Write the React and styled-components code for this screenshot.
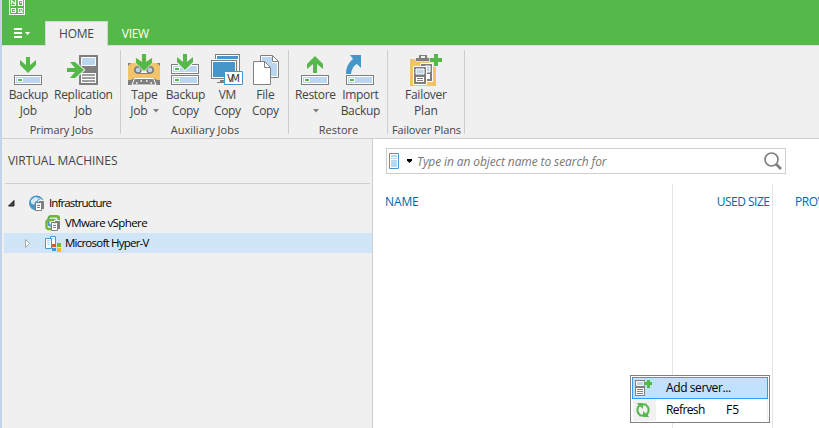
import React from "react";
import styled, { createGlobalStyle } from "styled-components";

const Global = createGlobalStyle`
  * { box-sizing: border-box; }
  body { margin: 0; background: #fff; overflow: hidden; }
  svg { display: block; flex: none; }
`;

const Window = styled.div`
  width: 819px;
  height: 428px;
  display: flex;
  flex-direction: column;
  overflow: hidden;
  border-left: 2px solid #c5d3e8;
  background: #f0f0f0;
  font-family: "Open Sans", "Noto Sans", sans-serif;
  font-size: 12px;
  color: #444;
  white-space: nowrap;
`;

const Text = styled.span`
  letter-spacing: ${(p) => p.$track || 0}px;
  margin-right: ${(p) => -(p.$track || 0)}px;
`;

const TitleBar = styled.header`
  height: 21px;
  flex: none;
  padding-left: 7px;
  background: #54b948;
`;

const TabBar = styled.nav`
  height: 25px;
  flex: none;
  display: flex;
  background: #54b948;
  border-bottom: 1px solid #dcdcdc;
`;

const FileMenu = styled.div`
  width: 43px;
  padding: 7px 0 0 12px;
`;

const Tab = styled.div`
  width: ${(p) => p.$width}px;
  height: 25px;
  display: flex;
  justify-content: center;
  line-height: 24px;
  color: ${(p) => (p.$active ? "#444" : "#fff")};
  background: ${(p) => (p.$active ? "#f0f0f0" : "transparent")};
  border: solid ${(p) => (p.$active ? "#cfdccd" : "transparent")};
  border-width: 1px 1px 0;
`;

const Ribbon = styled.section`
  height: 93px;
  flex: none;
  display: flex;
  padding: 4px 0;
  border-bottom: 1px solid #cfcfcf;
`;

const Group = styled.div`
  width: ${(p) => p.$width}px;
  height: 84px;
  display: flex;
  flex-direction: column;
  border-right: 1px solid #cfcfcf;
`;

const GroupTools = styled.div`
  height: 72px;
  flex: none;
  display: flex;
  padding: 4px 0 0 ${(p) => p.$inset}px;
`;

const GroupTitle = styled.div`
  display: flex;
  justify-content: center;
  padding-left: 1px;
  font-size: 11px;
  line-height: 16px;
`;

const Tool = styled.div`
  width: ${(p) => p.$width}px;
  display: flex;
  flex-direction: column;
  align-items: center;
  line-height: 16px;
`;

const ToolIcon = styled.div`
  height: 33px;
`;

const ToolLine = styled.div`
  height: 16px;
  display: flex;
  align-items: center;
  gap: 5px;
  padding-left: 1px;
`;

const Body = styled.main`
  flex: 1;
  display: flex;
  min-height: 0;
`;

const Sidebar = styled.aside`
  width: 371px;
  flex: none;
  border-right: 1px solid #cfcfcf;
`;

const SideTitle = styled.div`
  height: 45px;
  margin: 0 2px 0 3px;
  padding: 12px 0 0 3px;
  line-height: 20px;
  border-bottom: 1px solid #cfcfcf;
`;

const Tree = styled.div`
  padding-top: 9px;
`;

const TreeRow = styled.div`
  height: 20px;
  display: flex;
  align-items: center;
  margin-left: 2px;
  padding-left: ${(p) => p.$indent}px;
  color: #000;
  font-size: 11.5px;
  line-height: 18px;
  background: ${(p) => (p.$selected ? "#d1e5f9" : "transparent")};
`;

const TreeLabel = styled(Text)`
  padding-bottom: 1px;
`;

const Twisty = styled.div`
  width: ${(p) => p.$width}px;
`;

const TreeIcon = styled.div`
  width: 20px;
`;

const Content = styled.section`
  flex: 1;
  display: flex;
  flex-direction: column;
  background: #fff;
`;

const Search = styled.div`
  width: 400px;
  height: 26px;
  flex: none;
  margin: 9px 0 10px 13px;
  padding: 0 3px 0 2px;
  display: flex;
  align-items: center;
  border: 1px solid #cfcfcf;
`;

const Placeholder = styled.div`
  flex: 1;
  font-style: italic;
  color: #777;
  padding-left: 3px;
`;

const Columns = styled.div`
  flex: 1;
  display: flex;
`;

const Column = styled.div`
  width: ${(p) => p.$width}px;
  flex: none;
  display: flex;
  justify-content: ${(p) => p.$align || "flex-start"};
  padding: ${(p) => p.$pad};
  line-height: 18px;
  color: #0067b0;
  border-right: 1px solid #e4e4e4;
`;

const ContextMenu = styled.div`
  position: absolute;
  left: 630px;
  top: 375px;
  width: 140px;
  height: 48px;
  padding: 1px;
  background: #fff;
  border: 1px solid #808080;
  color: #000;
`;

const MenuItem = styled.div`
  height: 22px;
  display: flex;
  align-items: center;
  line-height: 20px;
  background: ${(p) => (p.$active ? "#c2e0ff" : "linear-gradient(90deg, #f1f1f1 23px, #fff 23px)")};
  border: 1px solid ${(p) => (p.$active ? "#3399ff" : "transparent")};
`;

const MenuIcon = styled.div`
  width: 33px;
  padding-left: 2px;
`;

const MenuLabel = styled.div`
  width: 60px;
`;

const GREEN = "#54b948";
const GRAY = "#7f7f7f";
const PALE = "#bbd6ef";
const BLUE = "#4796ca";

const Icon = ({ w = 32, h = 32, children }) => (
  <svg width={w} height={h} viewBox={`0 0 ${w} ${h}`}>{children}</svg>
);

const Drive = ({ x = 2, y = 21 }) => (
  <g>
    <rect x={x + 0.5} y={y + 0.5} width="27" height="9" fill="#fff" stroke={GRAY} />
    <rect x={x + 2} y={y + 2} width="24" height="6" fill={PALE} />
    <rect x={x + 3} y={y + 3} width="6" height="4" fill="#fff" />
    <rect x={x + 4} y={y + 4} width="4" height="2" fill={GREEN} />
  </g>
);

const DownArrow = ({ halo }) => (
  <path
    d="M14 3h4v8l6-5v5l-8 8-8-8V6l6 5z"
    fill={GREEN}
    stroke={halo ? "#f0f0f0" : "none"}
    strokeWidth="2"
    paintOrder="stroke"
  />
);

const Caret = ({ color = GRAY }) => (
  <Icon w={6} h={4}><path d="M0 0h6L3 3.5z" fill={color} /></Icon>
);

const BackupIcon = () => (
  <Icon><DownArrow /><Drive /></Icon>
);

const ReplicationIcon = () => (
  <Icon>
    <path d="M12 1h19v30H12z" fill={GRAY} />
    <path d="M14.5 3.5h14v8h-14z" fill={PALE} stroke="#fff" />
    <path d="M14 19h15v10H14z" fill="#fff" />
    <path d="M15 21h13M15 24h13M15 27h13" stroke={GRAY} strokeWidth="1.6" />
    <path d="M0 14h8L3 8h5l9 8-9 8H3l5-6H0z" fill={GREEN} stroke="#f0f0f0" strokeWidth="2" paintOrder="stroke" />
  </Icon>
);

const TapeIcon = () => (
  <Icon>
    <path d="M0 9h32v19H0z" fill="#f1c46a" />
    <path d="M0 9h3L0 12zM32 9h-3l3 3z" fill={GRAY} />
    <rect x="6.500" y="12.500" width="19" height="7" rx="3.500" fill="#fff" stroke={GRAY} />
    <circle cx="10" cy="16" r="3" fill={PALE} stroke={GRAY} strokeWidth="1.5" />
    <circle cx="22" cy="16" r="3" fill={PALE} stroke={GRAY} strokeWidth="1.5" />
    <path d="M0 26l3 0 3-2h20l3 2h3v5H0z" fill={GRAY} />
    <path d="M6.500 24.500h19L28 31H4z" fill={GRAY} stroke="#fff" />
    <path d="M8 29h1.500m3-2H14m4 0h1.500m3 2H24" stroke="#fff" strokeWidth="1.500" />
    <path d="M14 0h4v8l6-4v5l-8 8-8-8V4l6 4z" fill={GREEN} stroke="#f1e3c5" strokeWidth="1.500" paintOrder="stroke" />
  </Icon>
);

const BackupCopyIcon = () => (
  <Icon><Drive y={10} /><Drive y={21} /><g transform="translate(0 -3)"><DownArrow halo /></g></Icon>
);

const VmCopyIcon = () => (
  <Icon>
    <path d="M4 0h25v18H4z" fill={GRAY} />
    <path d="M5 1h23v16H5z" fill="#fff" />
    <path d="M6 2h21v14H6z" fill={BLUE} />
    <path d="M0 5h27v21H0z" fill="#f0f0f0" />
    <path d="M0 6h26v19H0z" fill={GRAY} />
    <path d="M1 7h24v17H1z" fill="#fff" />
    <path d="M2 8h22v15H2z" fill={BLUE} />
    <path d="M9 26h4v3H6v-1h3z" fill={GRAY} />
    <path d="M13.500 17.500h18v13h-18z" fill="#fff" stroke={BLUE} />
    <text x="22.500" y="28" textAnchor="middle" textLength="13" fontSize="10" fontFamily="DejaVu Sans" fill="#333">VM</text>
  </Icon>
);

const FileCopyIcon = () => (
  <Icon>
    <path d="M11.500 1.500h12l6 6v16h-18z" fill="#fff" stroke={GRAY} />
    <path d="M13 3h10v6h5v13H13z" fill={PALE} />
    <path d="M23.500 1.500v6h6" fill="none" stroke={GRAY} />
    <path d="M4.500 7.500h11l6 6v17h-17z" fill="#fff" stroke={GRAY} />
    <path d="M15.500 7.500v6h6" fill="none" stroke={GRAY} />
  </Icon>
);

const RestoreIcon = () => (
  <Icon><path d="M14 19h4V10l6 5v-5L16 2l-8 8v5l6-5z" fill={GREEN} /><Drive /></Icon>
);

const ImportIcon = () => (
  <Icon><path d="M6 1h11v13l-4-4c-4 2-5 5-6 10H2C2 14 4 9 9 5z" fill={BLUE} /><Drive /></Icon>
);

const FailoverIcon = () => (
  <Icon>
    <path d="M0 5h26v27H0z" fill="#f1c46a" />
    <path d="M6 7V4h3V1h8v3h3v3z" fill={GRAY} stroke="#f0f0f0" paintOrder="stroke" />
    <path d="M11 2h4v2h-4z" fill="#f0f0f0" />
    <path d="M10.500 9.500h12v18h-12z" fill={GRAY} stroke="#fff" />
    <path d="M15 12h5v6h-5z" fill={PALE} stroke="#fff" />
    <path d="M15 20h5v5h-5z" fill="#fff" />
    <path d="M3.500 12.500h13v18h-13z" fill={GRAY} stroke="#fff" />
    <path d="M6 15h8v5H6z" fill={PALE} stroke="#fff" />
    <path d="M6 23h8v5H6z" fill="#fff" /><path d="M7 24.500h6M7 26.500h6" stroke={GRAY} />
    <path d="M24 0h4v4h4v4h-4v4h-4V8h-4V4h4z" fill={GREEN} stroke="#f0f0f0" strokeWidth="1.500" paintOrder="stroke" />
  </Icon>
);

const LogoIcon = () => (
  <Icon w={16} h={16}>
    <path d="M.5-1v15.500h15V-1M2.500 0v4.500M2 5.500h5M6.500 0v6M3 1l3 3M9.500 5.500v-5h4v5zM11 2.500h1.500M2.500 8.500h4v4h-4zM4 10.500h1.500M9.500 8v4.500H14M9.500 8.500h4v2M11 10l3 3" stroke="#fff" strokeWidth="1.150" fill="none" />
  </Icon>
);

const ServerPair = ({ x, y }) => (
  <g transform={`translate(${x} ${y})`}>
    <path d="M3.500.5h6v9h-6z" fill={GRAY} stroke="#f0f0f0" />
    <path d="M.5 2.500h6v8h-6z" fill="#fff" stroke={GRAY} />
    <path d="M2 5.500h3M2 7.500h3" stroke={GRAY} />
    <path d="M2 4h3" stroke={PALE} />
  </g>
);

const InfraIcon = () => (
  <Icon w={17} h={17}>
    <circle cx="7.500" cy="8" r="7.500" fill={BLUE} />
    <path d="M2 5l4-3 4 1-2 3-2 1-1 3-3-2zM9 3l4 1-1 2z" fill="#d5eaf7" />
    <ServerPair x={6} y={5} />
  </Icon>
);

const VmwareIcon = () => (
  <Icon w={17} h={17}>
    <rect x="3.500" y="1.500" width="10" height="9" rx="2" fill="none" stroke={BLUE} strokeWidth="2" />
    <rect x="1.500" y="5" width="9" height="9" rx="2" fill="none" stroke="#76b82a" strokeWidth="2.400" />
    <path d="M4 2.500q0-1.500 2-1.500h6q2 0 2 2v3" fill="none" stroke="#76b82a" strokeWidth="2" />
    <ServerPair x={6} y={5} />
  </Icon>
);

const HyperVIcon = () => (
  <Icon w={17} h={17}>
    <path d="M5.500 1.500h5v9h-5z" fill="#fff" stroke={BLUE} />
    <path d="M.5 3.500h6v10h-6z" fill="#fff" stroke={BLUE} />
    <path d="M2 5.500h3M2 7.500h3M2 9.500h3M7 3.500h2" stroke={PALE} />
    <path d="M7 9h4v3H7z" fill="#e2552b" /><path d="M12 8h4v4h-4z" fill="#76b82a" />
    <path d="M7 13h4v3H7z" fill="#2f9be0" /><path d="M12 13h4v4h-4z" fill="#fdb813" />
  </Icon>
);

const groups = [
  { title: "Primary Jobs", width: 119, inset: 4, track: -0.1, tools: [
    { width: 44, icon: BackupIcon, lines: [["Backup", -0.3], ["Job", -0.2]] },
    { width: 66, icon: ReplicationIcon, lines: [["Replication", -0.3], ["Job", -0.2]] },
  ] },
  { title: "Auxiliary Jobs", width: 168, inset: 2, track: 0, tools: [
    { width: 42, icon: TapeIcon, lines: [["Tape", -0.3], ["Job", -0.2]], caret: true },
    { width: 40, icon: BackupCopyIcon, lines: [["Backup", -0.3], ["Copy", -0.3]] },
    { width: 44, icon: VmCopyIcon, lines: [["VM", -0.2], ["Copy", -0.3]] },
    { width: 32, icon: FileCopyIcon, lines: [["File", -0.2], ["Copy", -0.3]] },
  ] },
  { title: "Restore", width: 99, inset: 4, track: 0, tools: [
    { width: 44, icon: RestoreIcon, lines: [["Restore", -0.3], ["", 0]], caret: true },
    { width: 46, icon: ImportIcon, lines: [["Import", -0.3], ["Backup", -0.3]] },
  ] },
  { title: "Failover Plans", width: 77, inset: 12, track: -0.1, tools: [
    { width: 51, icon: FailoverIcon, lines: [["Failover", -0.25], ["Plan", -0.1]] },
  ] },
];

export default function App() {
  return (
    <Window>
      <Global />
      <TitleBar><LogoIcon /></TitleBar>
      <TabBar>
        <FileMenu>
          <Icon w={18} h={11}>
            <path d="M0 1h8M0 5h8M0 9h8" stroke="#fff" strokeWidth="2" />
            <path d="M11 4h5l-2.500 3z" fill="#fff" />
          </Icon>
        </FileMenu>
        <Tab $active $width={63}><Text $track={-0.2}>HOME</Text></Tab>
        <Tab $width={55}><Text $track={-0.3}>VIEW</Text></Tab>
      </TabBar>
      <Ribbon>
        {groups.map((g) => (
          <Group key={g.title} $width={g.width}>
            <GroupTools $inset={g.inset}>
              {g.tools.map((t, i) => (
                <Tool key={i} $width={t.width}>
                  <ToolIcon><t.icon /></ToolIcon>
                  {t.lines.map(([label, track], n) => (
                    <ToolLine key={n}>
                      {label && <Text $track={track}>{label}</Text>}
                      {t.caret && n === 1 && <Caret />}
                    </ToolLine>
                  ))}
                </Tool>
              ))}
            </GroupTools>
            <GroupTitle><Text $track={g.track}>{g.title}</Text></GroupTitle>
          </Group>
        ))}
      </Ribbon>
      <Body>
        <Sidebar>
          <SideTitle><Text $track={-0.08}>VIRTUAL MACHINES</Text></SideTitle>
          <Tree>
            <TreeRow $indent={4}>
              <Twisty $width={21}><Icon w={7} h={7}><path d="M6 .5v5.500H.5z" fill="#444" stroke="#222" /></Icon></Twisty>
              <TreeIcon><InfraIcon /></TreeIcon>
              <TreeLabel $track={-0.88}>Infrastructure</TreeLabel>
            </TreeRow>
            <TreeRow $indent={41}>
              <TreeIcon><VmwareIcon /></TreeIcon>
              <TreeLabel $track={-0.6}>VMware vSphere</TreeLabel>
            </TreeRow>
            <TreeRow $selected $indent={21}>
              <Twisty $width={20}><Icon w={6} h={9}><path d="M.5.5l4 4-4 4z" fill="#fff" stroke="#a6a6a6" /></Icon></Twisty>
              <TreeIcon><HyperVIcon /></TreeIcon>
              <TreeLabel $track={-0.77}>Microsoft Hyper-V</TreeLabel>
            </TreeRow>
          </Tree>
        </Sidebar>
        <Content>
          <Search>
            <Icon w={10} h={16}>
              <path d="M.5.5h9v15h-9z" fill="#fff" stroke={BLUE} />
              <path d="M2 2h6v2H2zM2 5h6v1H2zM2 7h6v7H2z" fill={PALE} />
            </Icon>
            <Icon w={15} h={4}><path d="M8 0h5v1.500L10.500 4 8 1.500z" fill="#000" /></Icon>
            <Placeholder><Text $track={-0.1}>Type in an object name to search for</Text></Placeholder>
            <Icon w={18} h={18}>
              <circle cx="7.500" cy="7.500" r="6.500" fill="none" stroke={GRAY} strokeWidth="1.700" />
              <path d="M12 12l5 5" stroke={GRAY} strokeWidth="2.600" />
            </Icon>
          </Search>
          <Columns>
            <Column $width={300} $pad="9px 0 0 12px"><Text $track={-0.1}>NAME</Text></Column>
            <Column $width={100} $align="flex-end" $pad="9px 2px 0 0"><Text $track={-0.5}>USED SIZE</Text></Column>
            <Column $width={100} $pad="9px 0 0 22px"><Text $track={-0.4}>PROV</Text></Column>
          </Columns>
        </Content>
      </Body>
      <ContextMenu>
        <MenuItem $active>
          <MenuIcon>
            <Icon w={17} h={16}>
              <path d="M0 0h10v16H0z" fill={GRAY} />
              <path d="M1.500 1.500h7v4h-7z" fill={PALE} stroke="#fff" />
              <path d="M1 8h8v7H1z" fill="#fff" /><path d="M2 9.500h6M2 11.500h6M2 13.500h6" stroke={GRAY} />
              <path d="M12 0h3v2h2v3h-2v3h-3V5H9V2h3z" fill={GREEN} stroke="#c2e0ff" paintOrder="stroke" />
            </Icon>
          </MenuIcon>
          <Text $track={-0.4}>Add server...</Text>
        </MenuItem>
        <MenuItem>
          <MenuIcon>
            <Icon w={17} h={16}>
              <path d="M5 13C1.500 10.500 1.500 5.500 5 3M11 3c3.500 2.500 3.500 7.500 0 10M8 2.500h3.500M8 13.500H4.500" fill="none" stroke={GREEN} strokeWidth="2" />
              <path d="M2 1h6v6L6 5 4 4zM14 15H8V9l2 2 2 1z" fill={GREEN} />
            </Icon>
          </MenuIcon>
          <MenuLabel><Text $track={-0.6}>Refresh</Text></MenuLabel>
          <Text>F5</Text>
        </MenuItem>
      </ContextMenu>
    </Window>
  );
}
